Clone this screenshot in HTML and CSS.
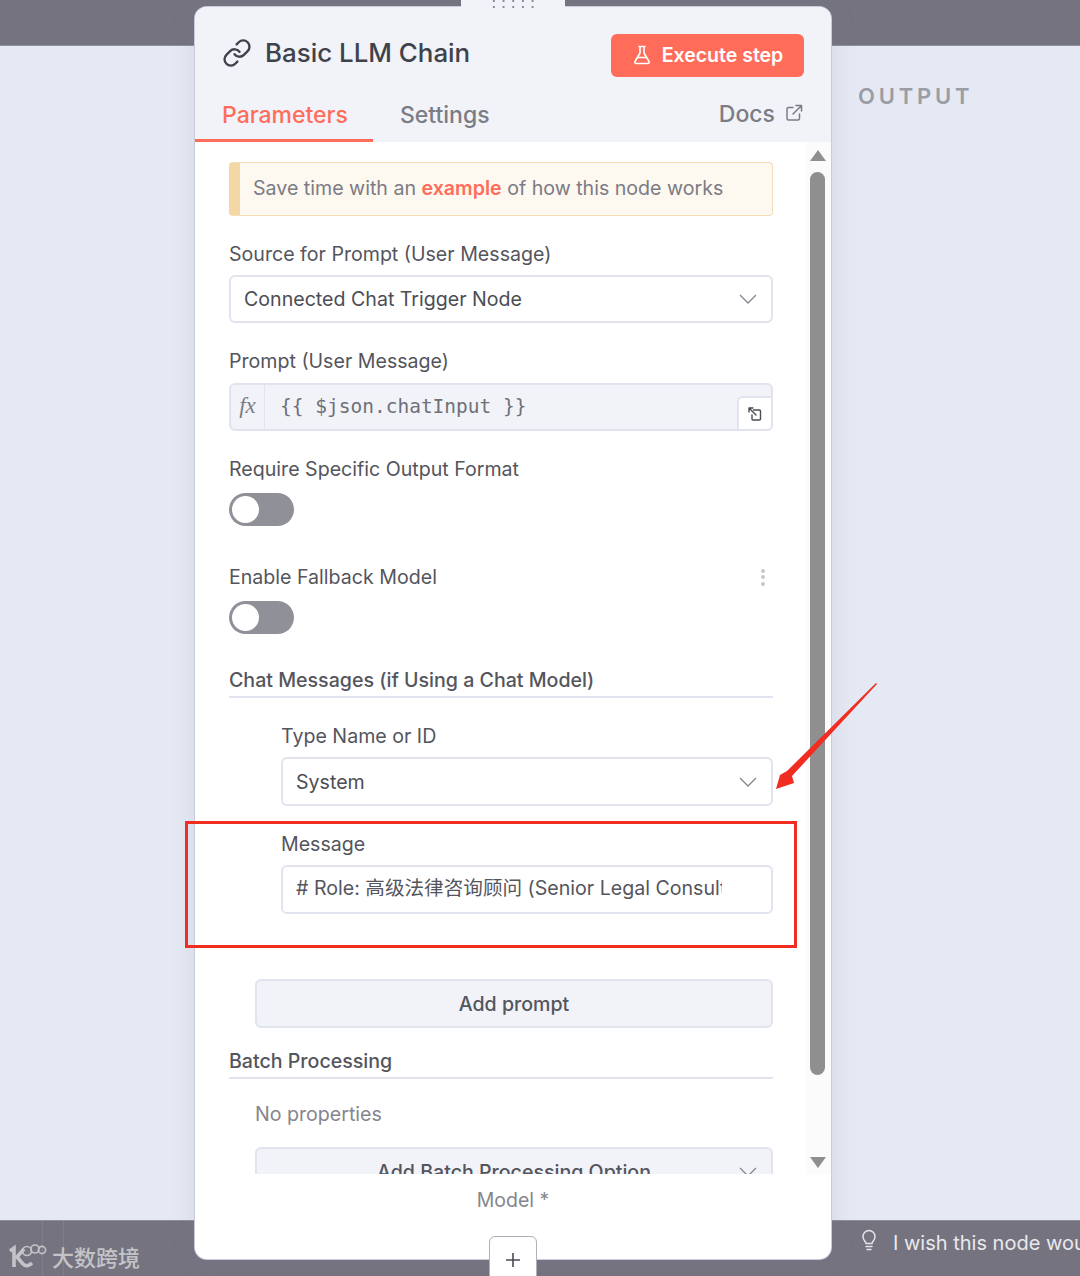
FILE: index.html
```html
<!DOCTYPE html>
<html lang="en">
<head>
  <meta charset="UTF-8" />
  <title>Basic LLM Chain</title>
  <link rel="stylesheet" href="styles.css">
</head>
<body>
  <div class="stage">
    <div class="top-bar"></div>
    <div class="middle">
      <div class="output-title">OUTPUT</div>
    </div>
    <div class="bottom-bar">
      <div class="watermark">
        <svg class="wm-logo" width="38" height="26" viewBox="0 0 38 26" fill="none" stroke="#c4c4c8">
          <path d="M1 8 L5 5 V24" stroke-width="3.6"/>
          <path d="M15 6 L8 14 L14 21 C17 24 20 23 23 20" stroke-width="3.6"/>
          <circle cx="18" cy="8" r="4.5" stroke-width="1.6"/>
          <circle cx="26" cy="6" r="4" stroke-width="1.6"/>
          <circle cx="33" cy="7" r="3.6" stroke-width="1.6"/>
        </svg>
        <span class="wm-text">大数跨境</span>
      </div>
      <div class="wish">
        <svg width="16" height="24" viewBox="0 0 16 24" fill="none" stroke="#e4e4e8" stroke-width="1.5" stroke-linecap="round">
          <path d="M5 14.5 C5 12.5 2 11.5 2 7.5 A6 6 0 0 1 14 7.5 C14 11.5 11 12.5 11 14.5 Z"/>
          <path d="M5 17.5 H11 M6 20.5 H10"/>
        </svg>
        <span>I wish this node would...</span>
      </div>
    </div>

    <div class="panel">
      <div class="drag-handle"><span class="drag-dots"></span></div>
      <div class="panel-head">
        <div class="head-row">
          <div class="node-title">
            <svg width="30" height="30" viewBox="0 0 24 24" fill="none" stroke="#40424a" stroke-width="1.9" stroke-linecap="round" stroke-linejoin="round">
              <path d="M10 13a5 5 0 0 0 7.5.5l3-3a5 5 0 0 0-7.1-7.1l-1.7 1.7"/>
              <path d="M14 11a5 5 0 0 0-7.5-.5l-3 3a5 5 0 0 0 7.1 7.1l1.7-1.7"/>
            </svg>
            <span>Basic LLM Chain</span>
          </div>
          <button class="exec-btn">
            <svg width="18" height="20" viewBox="0 0 18 20" fill="none" stroke="#fff" stroke-width="1.6" stroke-linecap="round" stroke-linejoin="round">
              <path d="M6 1.5 H12 M7 1.5 V8 L2 16.5 A1.3 1.3 0 0 0 3.2 18.5 H14.8 A1.3 1.3 0 0 0 16 16.5 L11 8 V1.5"/>
              <path d="M4.5 12.5 H13.5"/>
            </svg>
            <span>Execute step</span>
          </button>
        </div>
        <div class="tabs">
          <div class="tab active">Parameters</div>
          <div class="tab">Settings</div>
          <div class="tab docs">
            <span>Docs</span>
            <svg width="18" height="18" viewBox="0 0 18 18" fill="none" stroke="#7b7c84" stroke-width="1.5" stroke-linecap="round" stroke-linejoin="round">
              <path d="M8 3.5 H3.5 A1.5 1.5 0 0 0 2 5 V14.5 A1.5 1.5 0 0 0 3.5 16 H13 A1.5 1.5 0 0 0 14.5 14.5 V10"/>
              <path d="M11 1.5 H16.5 V7 M16.5 1.5 L8 10"/>
            </svg>
          </div>
        </div>
      </div>

      <div class="panel-body">
        <div class="params">
          <div class="notice">
            Save time with an <b>example</b> of how this node works
          </div>

          <div class="label first">Source for Prompt (User Message)</div>
          <div class="select">
            <span>Connected Chat Trigger Node</span>
            <svg class="chev" width="18" height="10" viewBox="0 0 18 10" fill="none" stroke="#85868d" stroke-width="1.3"><path d="M1 1 L9 9 L17 1"/></svg>
          </div>

          <div class="label">Prompt (User Message)</div>
          <div class="expr">
            <div class="fx">fx</div>
            <div class="expr-code">{{ $json.chatInput }}</div>
            <div class="expand">
              <svg width="16" height="16" viewBox="0 0 16 16" fill="none" stroke="#4a4b52" stroke-width="1.4" stroke-linecap="round" stroke-linejoin="round">
                <path d="M2 6 V2 H6 M2 2 L9 9"/>
                <path d="M6.5 4 H12.5 A1 1 0 0 1 13.5 5 V13 A1 1 0 0 1 12.5 14 H6 A1 1 0 0 1 5 13 V9"/>
              </svg>
            </div>
          </div>

          <div class="label tall">Require Specific Output Format</div>
          <div class="toggle"><span class="knob"></span></div>

          <div class="label label-dots">
            <span>Enable Fallback Model</span>
            <span class="dots"><i></i><i></i><i></i></span>
          </div>
          <div class="toggle"><span class="knob"></span></div>

          <div class="section-title chat">Chat Messages (if Using a Chat Model)</div>

          <div class="nested">
            <div class="label first">Type Name or ID</div>
            <div class="select type-select">
              <span>System</span>
              <svg class="chev" width="18" height="10" viewBox="0 0 18 10" fill="none" stroke="#85868d" stroke-width="1.3"><path d="M1 1 L9 9 L17 1"/></svg>
            </div>
            <div class="label first">Message</div>
            <div class="message-input"><span># Role: 高级法律咨询顾问 (Senior Legal Consultant)</span></div>
          </div>

          <button class="add-btn add-prompt">Add prompt</button>

          <div class="section-title batch">Batch Processing</div>
          <div class="no-props">No properties</div>
          <button class="add-btn add-option">
            <span>Add Batch Processing Option</span>
            <svg class="chev" width="18" height="10" viewBox="0 0 18 10" fill="none" stroke="#85868d" stroke-width="1.3"><path d="M1 1 L9 9 L17 1"/></svg>
          </button>
        </div>

        <div class="scrollbar">
          <span class="arrow-up"></span>
          <span class="thumb"></span>
          <span class="arrow-down"></span>
        </div>
      </div>

      <div class="panel-foot">Model *</div>
      <button class="plus-btn">
        <svg width="16" height="16" viewBox="0 0 16 16" stroke="#4a4b52" stroke-width="1.6"><path d="M8 1 V15 M1 8 H15"/></svg>
      </button>
    </div>

    <div class="red-box"></div>
    <svg class="red-arrow" width="110" height="115" viewBox="0 0 110 115">
      <path d="M104 2 L105 3 L20 95 L22 102 L4 108 L8 94 L15 90 Z" fill="#f02d20"/>
    </svg>
  </div>
</body>
</html>
```

FILE: styles.css
```css
html, body {
  margin: 0;
  padding: 0;
  height: 100%;
  font-family: Inter, 'Noto Sans CJK SC', sans-serif;
}

.stage {
  position: relative;
  width: 1080px;
  height: 1276px;
  overflow: hidden;
  display: flex;
  flex-direction: column;
  background: #e5e9f3;
}

.top-bar {
  height: 46px;
  box-sizing: border-box;
  background: #75737f;
  border-bottom: 1px solid #8f8e99;
}

.middle {
  flex: 1;
  padding: 35px 0 0 858px;
}

.output-title {
  font-size: 22px;
  line-height: 30px;
  font-weight: 600;
  letter-spacing: 3.8px;
  color: #9a9ca6;
}

.bottom-bar {
  height: 56px;
  box-sizing: border-box;
  background-color: #75737f;
  background-image: linear-gradient(#807e8a, #807e8a), linear-gradient(#807e8a, #807e8a);
  background-size: 1px 100%;
  background-position: 42px 0, 63px 0;
  background-repeat: no-repeat;
  border-top: 1px solid #8f8e99;
  display: flex;
  justify-content: space-between;
  overflow: hidden;
}

.watermark {
  display: flex;
  align-items: center;
  gap: 5px;
  padding: 15px 0 0 9px;
}

.wm-text {
  font-size: 22px;
  font-weight: 500;
  color: #c4c4c8;
}

.wish {
  display: flex;
  align-items: flex-start;
  gap: 16px;
  width: 219px;
  flex-shrink: 0;
  padding-top: 8px;
  white-space: nowrap;
  font-size: 20px;
  line-height: 28px;
  color: #e9e9ed;
}

.wish svg {
  flex-shrink: 0;
}

/* the node panel lies over the canvas */
.panel {
  position: absolute;
  left: 195px;
  top: 7px;
  width: 636px;
  height: 1252px;
  box-sizing: border-box;
  display: flex;
  flex-direction: column;
  background: #fff;
  border-radius: 12px;
  box-shadow: 0 0 0 1px #c9ccd8, 0 0 24px rgba(120, 130, 170, 0.18);
}

.drag-handle {
  position: absolute;
  left: 266px;
  top: -7px;
  width: 104px;
  height: 8px;
  background: #f1f3f9;
  display: flex;
  justify-content: center;
}

.drag-dots {
  width: 48px;
  height: 9px;
  background-image: radial-gradient(circle, #8b8c94 1.3px, transparent 1.5px);
  background-size: 9.7px 6px;
  background-position: 0 -2px;
}

.panel-head {
  height: 135px;
  box-sizing: border-box;
  background: #f1f3f9;
  border-radius: 12px 12px 0 0;
  display: flex;
  flex-direction: column;
}

.head-row {
  height: 85px;
  box-sizing: border-box;
  display: flex;
  justify-content: space-between;
  align-items: flex-start;
  padding: 27px 27px 0 27px;
}

.node-title {
  display: flex;
  align-items: center;
  gap: 13px;
  margin-top: 1px;
  font-size: 25.9px;
  line-height: 36px;
  font-weight: 500;
  color: #40424a;
}

.exec-btn {
  display: flex;
  align-items: center;
  gap: 11px;
  height: 43px;
  width: 193px;
  box-sizing: border-box;
  justify-content: center;
  padding: 0 0 2px 1px;
  border: none;
  border-radius: 6px;
  background: #ff6d5a;
  color: #fff;
  font-family: inherit;
  font-size: 19.5px;
  font-weight: 600;
}

.tabs {
  display: flex;
  flex: 1;
  padding-right: 28px;
}

.tab {
  box-sizing: border-box;
  height: 50px;
  padding: 8px 26px 0 27px;
  font-size: 23px;
  line-height: 30px;
  font-weight: 500;
  color: #7b7c84;
}

.tab.active {
  color: #ff6d5a;
  border-bottom: 3px solid #ff6d5a;
  padding-right: 25px;
}

.tab.docs {
  margin-left: auto;
  padding: 7px 0 0 0;
  display: flex;
  gap: 10px;
}

.tab.docs svg {
  margin-top: 5px;
}

.panel-body {
  height: 1032px;
  display: flex;
  overflow: hidden;
}

.params {
  width: 544px;
  margin-left: 34px;
  padding-top: 20px;
  flex-shrink: 0;
}

.notice {
  box-sizing: border-box;
  height: 54px;
  padding-left: 13px;
  border: 1px solid #f3dcb4;
  border-left: 11px solid #f3d8a6;
  border-radius: 4px;
  background: #fdf8f0;
  color: #7b7c84;
  font-size: 19.6px;
  line-height: 50px;
}

.notice b {
  color: #ff6d5a;
  font-weight: 600;
}

.label {
  height: 60px;
  box-sizing: border-box;
  padding-top: 25px;
  font-size: 19.6px;
  line-height: 26px;
  font-weight: 400;
  color: #54555d;
}

.label.first {
  height: 59px;
}

.label.tall {
  height: 62px;
}

.label-dots {
  display: flex;
  justify-content: space-between;
  height: 75px;
  padding-top: 38px;
}

.dots {
  display: flex;
  flex-direction: column;
  justify-content: center;
  gap: 2.5px;
  margin: 0 8px 0 0;
  height: 26px;
}

.dots i {
  width: 4px;
  height: 4px;
  border-radius: 50%;
  background: #c6c7cd;
}

.select {
  box-sizing: border-box;
  height: 48px;
  padding: 0 14px 0 13px;
  display: flex;
  align-items: center;
  justify-content: space-between;
  border: 2px solid #e1e4ee;
  border-radius: 6px;
  background: #fff;
  color: #4c4d55;
  font-size: 19.6px;
}

.select.type-select {
  height: 49px;
}

.expr {
  box-sizing: border-box;
  height: 48px;
  display: flex;
  position: relative;
  border: 2px solid #e1e4ee;
  border-radius: 6px;
  background: #f1f3f9;
}

.fx {
  width: 33px;
  flex-shrink: 0;
  border-right: 1px solid #e1e4ee;
  text-align: center;
  font-family: 'Liberation Serif', serif;
  font-style: italic;
  font-size: 23px;
  line-height: 42px;
  color: #7b7c84;
}

.expr-code {
  padding-left: 15px;
  font-family: 'DejaVu Sans Mono', monospace;
  font-size: 19.5px;
  line-height: 44px;
  color: #6f7078;
}

.expand {
  position: absolute;
  right: -2px;
  bottom: -2px;
  width: 36px;
  height: 35px;
  box-sizing: border-box;
  display: flex;
  align-items: center;
  justify-content: center;
  background: #fff;
  border: 2px solid #e1e4ee;
  border-radius: 6px 0 6px 0;
}

.toggle {
  width: 65px;
  height: 33px;
  box-sizing: border-box;
  padding: 3px;
  border-radius: 17px;
  background: #909198;
}

.knob {
  display: block;
  width: 27px;
  height: 27px;
  border-radius: 50%;
  background: #fff;
}

.section-title {
  box-sizing: border-box;
  font-size: 19.6px;
  line-height: 26px;
  font-weight: 500;
  color: #54555d;
  border-bottom: 2px solid #e1e4ee;
}

.section-title.chat {
  height: 64px;
  padding-top: 33px;
}

.nested {
  margin-left: 52px;
}

.message-input {
  box-sizing: border-box;
  height: 49px;
  padding: 0 49px 0 13px;
  display: flex;
  align-items: center;
  border: 2px solid #e1e4ee;
  border-radius: 6px;
  color: #54555d;
  font-size: 19.6px;
  white-space: nowrap;
}

.message-input span {
  display: block;
  overflow: hidden;
  line-height: 26px;
  margin-top: -3px;
}

.add-btn {
  display: block;
  position: relative;
  width: 518px;
  height: 49px;
  margin-left: 26px;
  box-sizing: border-box;
  border: 2px solid #e1e4ee;
  border-radius: 6px;
  background: #f1f3f9;
  color: #54555d;
  font-family: inherit;
  font-size: 19.6px;
  font-weight: 450;
}

.add-prompt {
  margin-top: 65px;
}

.add-option .chev {
  position: absolute;
  right: 14px;
  top: 18px;
}

.section-title.batch {
  height: 51px;
  padding-top: 20px;
}

.no-props {
  height: 68px;
  padding: 22px 0 0 26px;
  box-sizing: border-box;
  font-size: 19.6px;
  line-height: 26px;
  color: #85868d;
}

.scrollbar {
  width: 25px;
  margin-left: 33px;
  padding-left: 4px;
  box-sizing: border-box;
  background: #fbfbfc;
  display: flex;
  flex-direction: column;
  align-items: flex-start;
}

.arrow-up, .arrow-down {
  width: 0;
  height: 0;
  border-left: 8px solid transparent;
  border-right: 8px solid transparent;
}

.arrow-up {
  margin: 8px 0 11px 0;
  border-bottom: 11px solid #8f8f8f;
}

.arrow-down {
  margin-top: 82px;
  border-top: 11px solid #8f8f8f;
}

.thumb {
  width: 15px;
  height: 903px;
  border-radius: 8px;
  background: #8f8f8f;
}

.panel-foot {
  flex: 1;
  padding-top: 13px;
  box-sizing: border-box;
  text-align: center;
  font-size: 19.5px;
  line-height: 26px;
  color: #85868d;
}

.plus-btn {
  position: absolute;
  left: 294px;
  top: 1229px;
  width: 48px;
  height: 50px;
  box-sizing: border-box;
  display: flex;
  align-items: center;
  justify-content: center;
  padding: 0 0 2px 0;
  border: 1.5px solid #aeb0ba;
  border-radius: 6px 6px 0 0;
  background: #fff;
}

/* annotations drawn over the screenshot */
.red-box {
  position: absolute;
  left: 185px;
  top: 821px;
  width: 612px;
  height: 127px;
  box-sizing: border-box;
  border: 3px solid #f02d20;
}

.red-arrow {
  position: absolute;
  left: 772px;
  top: 681px;
}
```
